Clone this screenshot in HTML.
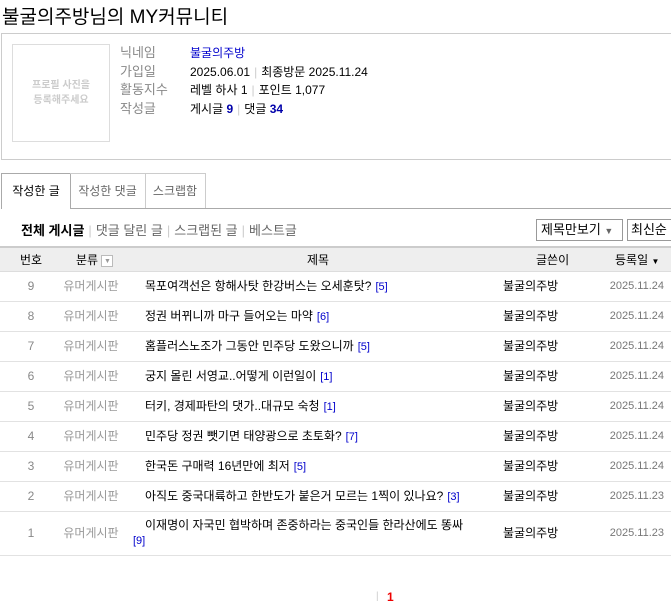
<!DOCTYPE html>
<html><head><meta charset="utf-8"><style>
*{margin:0;padding:0;box-sizing:border-box}
body{width:671px;height:614px;overflow:hidden;background:#fff;font-family:"Liberation Sans","Noto Sans CJK KR","NanumGothic",sans-serif;font-size:12px;color:#000;position:relative}
.a{position:absolute;white-space:nowrap}
.g{color:#888}
.b{color:#0000cc}
.sep{color:#ccc;margin:0 4px}
.row{position:absolute;left:0;width:671px;height:30px;border-bottom:1px solid #e2e2e2}
.row span{position:absolute;top:0;line-height:29px;white-space:nowrap}
.n{left:0;width:62px;text-align:center;color:#888}
.c{left:62px;width:58px;text-align:center;color:#999}
.t{left:145px;font-size:12px}
.t i{font-style:normal;color:#0000cc;font-size:11px;margin-left:4px}
.w{left:503px}
.d{right:7px;color:#777;font-size:11px}
.tab{position:absolute;top:173px;height:36px;text-align:center;line-height:34px;font-size:12px;white-space:nowrap}
</style></head><body>
<div class="a" style="left:2px;top:2px;font-size:19px">불굴의주방님의 MY커뮤니티</div>
<div class="a" style="left:1px;top:33px;width:680px;height:127px;border:1px solid #ccc;border-right:none"></div>
<div class="a" style="left:12px;top:44px;width:98px;height:98px;border:1px solid #ddd;color:#ccc;font-size:10px;text-align:center;line-height:15px;padding-top:33px;font-weight:bold">프로필 사진을<br>등록해주세요</div>
<div class="a g" style="left:120px;top:44px;line-height:18.5px;font-size:13px">닉네임<br>가입일<br>활동지수<br>작성글</div>
<div class="a" style="left:190px;top:44px;line-height:18.5px;font-size:12px"><span class="b">불굴의주방</span><br>2025.06.01<span class="sep">|</span>최종방문 2025.11.24<br>레벨 하사 1<span class="sep">|</span>포인트 1,077<br>게시글 <b style="color:#0000aa">9</b><span class="sep">|</span>댓글 <b style="color:#0000aa">34</b></div>
<div class="a" style="left:70px;top:208px;width:601px;border-top:1px solid #aaa"></div>
<div class="tab" style="left:1px;width:70px;border:1px solid #aaa;border-bottom:none;background:#fff">작성한 글</div>
<div class="tab" style="left:70px;width:76px;height:35px;border:1px solid #ccc;border-left:none;border-bottom:none;color:#666">작성한 댓글</div>
<div class="tab" style="left:145px;width:61px;height:35px;border:1px solid #ccc;border-left:none;border-bottom:none;color:#666">스크랩함</div>
<div class="a" style="left:21px;top:220px;font-size:13px"><b>전체 게시글</b><span class="sep">|</span><span style="color:#666">댓글 달린 글</span><span class="sep">|</span><span style="color:#666">스크랩된 글</span><span class="sep">|</span><span style="color:#666">베스트글</span></div>
<div class="a" style="left:536px;top:219px;width:87px;height:22px;border:1px solid #999;font-size:13px;line-height:19px;padding:0 4px">제목만보기 <span style="font-size:9px;color:#666">▼</span></div>
<div class="a" style="left:627px;top:219px;width:50px;height:22px;border:1px solid #999;font-size:13px;line-height:19px;padding:0 3px">최신순</div>
<div class="a" style="left:0;top:246px;width:671px;height:26px;background:#eee;border-top:2px solid #ccc;border-bottom:1px solid #ddd"></div>
<div class="a" style="left:20px;top:251px">번호</div>
<div class="a" style="left:76px;top:251px">분류 <span style="display:inline-block;width:12px;height:12px;border:1px solid #bbb;background:#fff;font-size:7px;color:#999;text-align:center;line-height:11px;vertical-align:middle">▼</span></div>
<div class="a" style="left:307px;top:251px">제목</div>
<div class="a" style="left:536px;top:251px">글쓴이</div>
<div class="a" style="left:615px;top:251px">등록일 <span style="font-size:8px">▼</span></div>

<div class="row" style="top:272px"><span class="n">9</span><span class="c">유머게시판</span><span class="t">목포여객선은 항해사탓 한강버스는 오세훈탓?<i>[5]</i></span><span class="w">불굴의주방</span><span class="d">2025.11.24</span></div>
<div class="row" style="top:302px"><span class="n">8</span><span class="c">유머게시판</span><span class="t">정권 버뀌니까 마구 들어오는 마약<i>[6]</i></span><span class="w">불굴의주방</span><span class="d">2025.11.24</span></div>
<div class="row" style="top:332px"><span class="n">7</span><span class="c">유머게시판</span><span class="t">홈플러스노조가 그동안 민주당 도왔으니까<i>[5]</i></span><span class="w">불굴의주방</span><span class="d">2025.11.24</span></div>
<div class="row" style="top:362px"><span class="n">6</span><span class="c">유머게시판</span><span class="t">궁지 몰린 서영교..어떻게 이런일이<i>[1]</i></span><span class="w">불굴의주방</span><span class="d">2025.11.24</span></div>
<div class="row" style="top:392px"><span class="n">5</span><span class="c">유머게시판</span><span class="t">터키, 경제파탄의 댓가..대규모 숙청<i>[1]</i></span><span class="w">불굴의주방</span><span class="d">2025.11.24</span></div>
<div class="row" style="top:422px"><span class="n">4</span><span class="c">유머게시판</span><span class="t">민주당 정권 뺏기면 태양광으로 초토화?<i>[7]</i></span><span class="w">불굴의주방</span><span class="d">2025.11.24</span></div>
<div class="row" style="top:452px"><span class="n">3</span><span class="c">유머게시판</span><span class="t">한국돈 구매력 16년만에 최저<i>[5]</i></span><span class="w">불굴의주방</span><span class="d">2025.11.24</span></div>
<div class="row" style="top:482px"><span class="n">2</span><span class="c">유머게시판</span><span class="t">아직도 중국대륙하고 한반도가 붙은거 모르는 1찍이 있나요?<i>[3]</i></span><span class="w">불굴의주방</span><span class="d">2025.11.23</span></div>
<div class="row" style="top:512px;height:44px"><span class="n" style="line-height:42px">1</span><span class="c" style="line-height:42px">유머게시판</span><span class="t" style="top:4px;line-height:18px">이재명이 자국민 협박하며 존중하라는 중국인들 한라산에도 똥싸</span><span style="left:133px;top:20px;line-height:18px;color:#0000cc;font-size:11px">[9]</span><span class="w" style="line-height:42px">불굴의주방</span><span class="d" style="line-height:42px">2025.11.23</span></div>
<div class="a" style="left:376px;top:591px;color:#ccc;font-size:10px">|</div>
<div class="a" style="left:387px;top:590px;color:#e00;font-weight:bold;font-size:12px">1</div>
</body></html>
